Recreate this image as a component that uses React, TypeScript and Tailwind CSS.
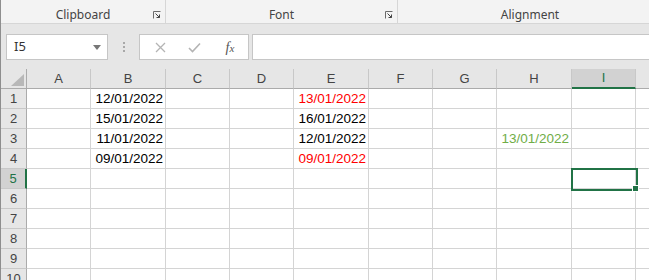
import React from 'react';

const cols = [
  { name: 'A', w: 64 },
  { name: 'B', w: 75 },
  { name: 'C', w: 64 },
  { name: 'D', w: 64 },
  { name: 'E', w: 75 },
  { name: 'F', w: 64 },
  { name: 'G', w: 64 },
  { name: 'H', w: 75 },
  { name: 'I', w: 64 },
  { name: '', w: 64 },
];

const RED = 'text-[#ff0000]';
const GREEN = 'text-[#70ad47]';

const cells: Record<string, { v: string; c?: string }> = {
  B1: { v: '12/01/2022' },
  B2: { v: '15/01/2022' },
  B3: { v: '11/01/2022' },
  B4: { v: '09/01/2022' },
  E1: { v: '13/01/2022', c: RED },
  E2: { v: '16/01/2022' },
  E3: { v: '12/01/2022' },
  E4: { v: '09/01/2022', c: RED },
  H3: { v: '13/01/2022', c: GREEN },
};

const rows = [1, 2, 3, 4, 5, 6, 7, 8, 9, 10];

const Launcher = () => (
  <svg width="8" height="8" viewBox="0 0 8 8" className="shrink-0">
    <path d="M0.5 7.5V0.5H7.5" fill="none" stroke="#6b6b6b" strokeWidth="1" />
    <path d="M2.5 2.5L6.5 6.5M3.5 6.5H6.5V3.5" fill="none" stroke="#444" strokeWidth="1" />
  </svg>
);

const Ribbon = () => (
  <div className="flex h-[24px] bg-[#f3f3f3] border-b border-[#d6d6d6] text-[12px] text-[#444]">
    <div className="relative flex w-[165px] shrink-0 items-center justify-center border-r border-[#d6d6d6] pt-[7px]">
      <span>Clipboard</span>
      <div className="absolute right-[4px] top-[11px]"><Launcher /></div>
    </div>
    <div className="relative flex w-[232px] shrink-0 items-center justify-center border-r border-[#d6d6d6] pt-[7px]">
      <span>Font</span>
      <div className="absolute right-[4px] top-[11px]"><Launcher /></div>
    </div>
    <div className="flex w-[264px] shrink-0 items-center justify-center pt-[7px]">
      <span>Alignment</span>
    </div>
  </div>
);

const FormulaBar = () => (
  <div className="flex h-[45px] items-start bg-[#e6e6e6] pt-[10px]">
    <div className="ml-[5px] flex h-[26px] w-[102px] items-center justify-between border border-[#c6c6c6] bg-white pl-[7px] pr-[6px]">
      <span className="text-[13px] text-[#333]">I5</span>
      <svg width="8" height="5" viewBox="0 0 8 5">
        <path d="M0 0H8L4 5Z" fill="#777" />
      </svg>
    </div>
    <div className="flex h-[26px] w-[31px] flex-col items-center justify-center gap-[2px]">
      <div className="h-[2px] w-[2px] bg-[#a8a8a8]" />
      <div className="h-[2px] w-[2px] bg-[#a8a8a8]" />
      <div className="h-[2px] w-[2px] bg-[#a8a8a8]" />
    </div>
    <div className="flex h-[26px] w-[110px] items-center border border-[#c6c6c6] bg-white">
      <div className="flex w-[36px] justify-center pl-[4px]">
        <svg width="11" height="11" viewBox="0 0 11 11">
          <path d="M1 1L10 10M10 1L1 10" stroke="#b4b4b4" strokeWidth="1.3" />
        </svg>
      </div>
      <div className="flex w-[36px] justify-center">
        <svg width="13" height="11" viewBox="0 0 13 11">
          <path d="M1 6L4.5 9.5L12 1.5" fill="none" stroke="#b4b4b4" strokeWidth="1.6" />
        </svg>
      </div>
      <div className="flex w-[36px] justify-center">
        <span className="text-[14px] italic text-[#555] [font-family:'Liberation_Serif',serif]">
          f<span className="text-[11px]">x</span>
        </span>
      </div>
    </div>
    <div className="ml-[3px] h-[26px] flex-1 border border-r-0 border-[#c6c6c6] bg-white" />
  </div>
);

const Grid = () => (
  <div className="relative">
    <div className="flex h-[20px] bg-[#e6e6e6]">
      <div className="relative h-[20px] w-[26px] shrink-0 border-b border-r border-[#ababab]">
        <svg width="13" height="12" viewBox="0 0 13 12" className="absolute bottom-[2px] right-[2px]">
          <path d="M13 0V12H0Z" fill="#b8b8b8" />
        </svg>
      </div>
      {cols.map((c, i) =>
        c.name === 'I' ? (
          <div
            key={i}
            style={{ width: c.w }}
            className="flex h-[20px] shrink-0 items-center justify-center border-b-2 border-r border-b-[#217346] border-r-[#c8c8c8] bg-[#d2d2d2] text-[13px] text-[#217346]"
          >
            {c.name}
          </div>
        ) : (
          <div
            key={i}
            style={{ width: c.w }}
            className="flex h-[20px] shrink-0 items-center justify-center border-b border-r border-b-[#ababab] border-r-[#c8c8c8] text-[13px] text-[#444]"
          >
            {c.name}
          </div>
        )
      )}
    </div>
    {rows.map((r) => (
      <div key={r} className="flex h-[20px]">
        {r === 5 ? (
          <div className="flex h-[20px] w-[26px] shrink-0 items-center justify-center border-b border-r-2 border-b-[#c8c8c8] border-r-[#217346] bg-[#d2d2d2] text-[13px] text-[#217346]">
            {r}
          </div>
        ) : (
          <div className="flex h-[20px] w-[26px] shrink-0 items-center justify-center border-b border-r border-b-[#c8c8c8] border-r-[#ababab] bg-[#e6e6e6] text-[13px] text-[#444]">
            {r}
          </div>
        )}
        {cols.map((c, i) => {
          const cell = cells[c.name + r];
          return (
            <div
              key={i}
              style={{ width: c.w }}
              className={`flex h-[20px] shrink-0 items-end justify-end border-b border-r border-[#d4d4d4] bg-white pb-[1px] pr-[2px] text-[13.5px] leading-[17px] ${cell?.c ?? 'text-black'}`}
            >
              {cell?.v}
            </div>
          );
        })}
      </div>
    ))}
    <div className="absolute left-[570px] top-[99px] h-[23px] w-[67px] border-2 border-[#217346]" />
    <div className="absolute left-[631px] top-[116px] h-[7px] w-[7px] border border-white bg-[#217346]" />
  </div>
);

export default function App() {
  return (
    <div className="h-[280px] w-[649px] overflow-hidden border-l border-[#8e8e8e] bg-white [font-family:'Noto_Sans','Liberation_Sans',sans-serif]">
      <Ribbon />
      <FormulaBar />
      <div className="[font-family:'Liberation_Sans',sans-serif]">
        <Grid />
      </div>
    </div>
  );
}
